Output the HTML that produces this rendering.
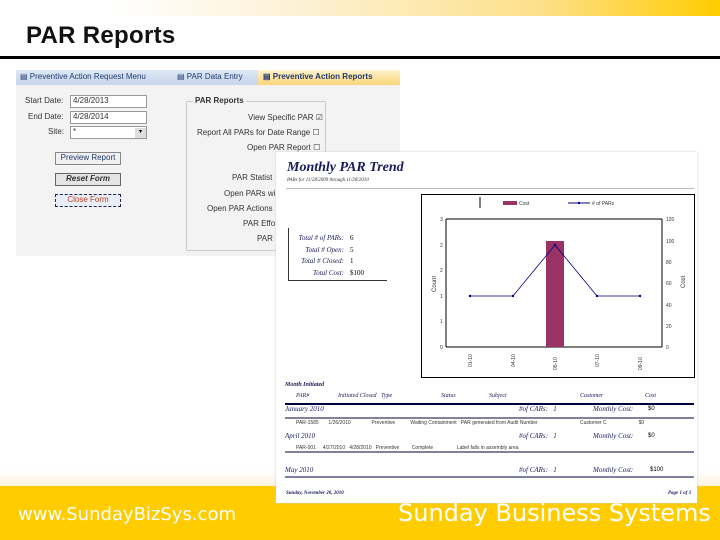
<!DOCTYPE html>
<html><head><meta charset="utf-8"><style>
*{margin:0;padding:0;box-sizing:border-box}
body{width:720px;height:540px;position:relative;overflow:hidden;background:#fff;font-family:"Liberation Sans",sans-serif}
.a{position:absolute;white-space:nowrap}
.s{font-family:"Liberation Serif",serif;font-style:italic;color:#1a1a5a}
.f{font-size:8px;color:#333}
.r{font-size:5px;color:#333}
</style></head><body>
<div class="a" style="left:0;top:0;width:720px;height:16px;background:linear-gradient(90deg,#fff 0%,#fff 15%,#fdf2d8 40%,#fde08a 75%,#ffcc00 100%)"></div>
<div class="a" style="left:26px;top:22px;font-size:24px;font-weight:bold;color:#111;letter-spacing:0.3px">PAR Reports</div>
<div class="a" style="left:0;top:56px;width:720px;height:3px;background:#000"></div>

<div class="a" style="left:16px;top:85px;width:384px;height:171px;background:#f3f3f3"></div>
<div class="a" style="left:16px;top:70px;width:384px;height:15px;background:linear-gradient(#dfe8f5,#c5d5ea)"></div>
<div class="a" style="left:258px;top:70px;width:142px;height:15px;background:linear-gradient(#fff2cc,#fcd47a)"></div>
<div class="a f" style="left:20px;top:72px;color:#203a70">▤ Preventive Action Request Menu</div>
<div class="a f" style="left:177px;top:72px;color:#203a70">▤ PAR Data Entry</div>
<div class="a f" style="left:263px;top:72px;color:#203a70;font-weight:bold">▤ Preventive Action Reports</div>
<div class="a f" style="left:25px;top:96px">Start Date:</div>
<div class="a f" style="left:28px;top:112px">End Date:</div>
<div class="a f" style="left:48px;top:127px">Site:</div>
<div class="a" style="left:70px;top:95px;width:77px;height:13px;background:#fff;border:1px solid #999"></div>
<div class="a f" style="left:73px;top:96px">4/28/2013</div>
<div class="a" style="left:70px;top:111px;width:77px;height:13px;background:#fff;border:1px solid #999"></div>
<div class="a f" style="left:73px;top:112px">4/28/2014</div>
<div class="a" style="left:70px;top:126px;width:77px;height:13px;background:#fff;border:1px solid #999"></div>
<div class="a f" style="left:73px;top:127px">*</div>
<div class="a" style="left:135px;top:128px;width:11px;height:10px;background:#ddd;font-size:6px;text-align:center">▾</div>
<div class="a f" style="left:55px;top:152px;width:66px;height:13px;border:1px solid #888;background:#f0f0f0;text-align:center;color:#203a70">Preview Report</div>
<div class="a f" style="left:55px;top:173px;width:66px;height:13px;border:1px solid #666;background:#e4e4e4;text-align:center;font-weight:bold;font-style:italic">Reset Form</div>
<div class="a f" style="left:55px;top:194px;width:66px;height:13px;border:1px dashed #225;background:#e8eef8;text-align:center;color:#c04020">Close Form</div>
<div class="a" style="left:186px;top:101px;width:140px;height:150px;border:1px solid #ccc"></div>
<div class="a f" style="left:193px;top:96px;font-weight:bold;background:#f3f3f3;padding:0 2px">PAR Reports</div>
<div class="a f" style="left:248px;top:113px">View Specific PAR ☑</div>
<div class="a f" style="left:197px;top:128px">Report All PARs for Date Range ☐</div>
<div class="a f" style="left:247px;top:143px">Open PAR Report ☐</div>
<div class="a f" style="left:232px;top:173px">PAR Statist</div>
<div class="a f" style="left:224px;top:189px">Open PARs wi</div>
<div class="a f" style="left:207px;top:204px">Open PAR Actions</div>
<div class="a f" style="left:243px;top:219px">PAR Effo</div>
<div class="a f" style="left:257px;top:234px">PAR</div>

<div class="a" style="left:0;top:470px;width:720px;height:16px;background:linear-gradient(#fff,#fdf3dc)"></div>
<div class="a" style="left:0;top:486px;width:720px;height:54px;background:#ffcc00"></div>
<div class="a" style="left:18px;top:504px;font-size:18px;color:#fff;font-family:'DejaVu Sans',sans-serif">www.SundayBizSys.com</div>

<div class="a" style="left:276px;top:152px;width:421px;height:351px;background:#fff;box-shadow:0 0 2px #ccc"></div>
<div class="a s" style="left:287px;top:160px;font-size:14px;font-weight:bold">Monthly PAR Trend</div>
<div class="a s r" style="left:287px;top:178px">PARs for 11/28/2009 through 11/28/2010</div>
<div class="a" style="left:286px;top:188px;width:408px;height:1px;background:#bbb"></div>
<div class="a" style="left:288px;top:228px;width:99px;height:53px;border-left:1px solid #333;border-bottom:1px solid #333"></div>
<div class="a s" style="left:290px;top:233px;font-size:7px;line-height:11.5px;text-align:right;width:54px">Total # of PARs:<br>Total # Open:<br>Total # Closed:<br>Total Cost:</div>
<div class="a" style="left:350px;top:233px;font-size:7px;line-height:11.5px;font-family:'Liberation Serif',serif">6<br>5<br>1<br>$100</div>

<svg class="a" style="left:0;top:0" width="720" height="540">
<rect x="421.5" y="194.5" width="273" height="183" fill="#fff" stroke="#000"/>
<line x1="480" y1="197" x2="480" y2="208" stroke="#000"/>
<rect x="503" y="201" width="14" height="4" fill="#993366"/>
<text x="519" y="205" font-size="5" fill="#333">Cost</text>
<line x1="568" y1="203" x2="590" y2="203" stroke="#000080"/><circle cx="579" cy="203" r="1.2" fill="#000080"/>
<text x="592" y="205" font-size="5" fill="#333"># of PARs</text>
<line x1="446" y1="219" x2="446" y2="347" stroke="#000"/>
<line x1="662" y1="219" x2="662" y2="347" stroke="#000"/>
<line x1="446" y1="347" x2="662" y2="347" stroke="#000"/>
<line x1="446" y1="219" x2="662" y2="219" stroke="#000"/>
<rect x="546" y="241" width="18" height="106" fill="#993366"/>
<polyline points="470,296 513,296 555,245 597,296 640,296" fill="none" stroke="#000080" stroke-width="0.8"/>
<g fill="#000080"><circle cx="470" cy="296" r="1.2"/><circle cx="513" cy="296" r="1.2"/><circle cx="555" cy="245" r="1.2"/><circle cx="597" cy="296" r="1.2"/><circle cx="640" cy="296" r="1.2"/></g>
<g font-size="5" fill="#333" font-family="Liberation Sans">
<text x="440" y="221">3</text><text x="440" y="247">2</text><text x="440" y="272">2</text><text x="440" y="298">1</text><text x="440" y="323">1</text><text x="440" y="349">0</text>
<text x="666" y="221">120</text><text x="666" y="243">100</text><text x="666" y="264">80</text><text x="666" y="285">60</text><text x="666" y="307">40</text><text x="666" y="328">20</text><text x="666" y="349">0</text>
<text x="0" y="0" transform="translate(436,292) rotate(-90)" font-size="6">Count</text>
<text x="0" y="0" transform="translate(685,288) rotate(-90)" font-size="6">Cost</text>
<text transform="translate(472,367) rotate(-90)">01-10</text><text transform="translate(515,367) rotate(-90)">04-10</text><text transform="translate(557,370) rotate(-90)">05-10</text><text transform="translate(599,367) rotate(-90)">07-10</text><text transform="translate(642,370) rotate(-90)">09-10</text>
</g>
<line x1="285" y1="404" x2="694" y2="404" stroke="#000040" stroke-width="2"/>
<line x1="285" y1="418" x2="694" y2="418" stroke="#000040"/>
<line x1="285" y1="452" x2="694" y2="452" stroke="#000040"/>
<line x1="285" y1="477" x2="694" y2="477" stroke="#000040"/>
</svg>
<div class="a s" style="left:285px;top:382px;font-size:6px;font-weight:bold">Month Initiated</div>
<div class="a s" style="left:296px;top:393px;font-size:6px">PAR#</div>
<div class="a s" style="left:338px;top:393px;font-size:6px">Initiated Closed &nbsp; Type</div>
<div class="a s" style="left:441px;top:393px;font-size:6px">Status</div>
<div class="a s" style="left:489px;top:393px;font-size:6px">Subject</div>
<div class="a s" style="left:580px;top:393px;font-size:6px">Customer</div>
<div class="a s" style="left:645px;top:393px;font-size:6px">Cost</div>
<div class="a s" style="left:285px;top:405px;font-size:7px">January 2010</div>
<div class="a s" style="left:519px;top:405px;font-size:7px">#of CARs: &nbsp; 1</div>
<div class="a s" style="left:593px;top:405px;font-size:7px">Monthly Cost:</div>
<div class="a" style="left:648px;top:406px;font-size:6px">$0</div>
<div class="a r" style="left:296px;top:420px">PAR-1585 &nbsp; &nbsp; &nbsp; 1/26/2010 &nbsp; &nbsp; &nbsp; &nbsp; &nbsp; &nbsp; &nbsp; Preventive &nbsp; &nbsp; &nbsp; &nbsp; &nbsp; Waiting Containment &nbsp; PAR generated from Audit Number</div>
<div class="a r" style="left:580px;top:420px">Customer C &nbsp; &nbsp; &nbsp; &nbsp; &nbsp; &nbsp; &nbsp; &nbsp; &nbsp; &nbsp; &nbsp; $0</div>
<div class="a s" style="left:285px;top:432px;font-size:7px">April 2010</div>
<div class="a s" style="left:519px;top:432px;font-size:7px">#of CARs: &nbsp; 1</div>
<div class="a s" style="left:593px;top:432px;font-size:7px">Monthly Cost:</div>
<div class="a" style="left:648px;top:433px;font-size:6px">$0</div>
<div class="a r" style="left:296px;top:445px">PAR-001 &nbsp; &nbsp; 4/27/2010 &nbsp; 4/28/2010 &nbsp; Preventive &nbsp; &nbsp; &nbsp; &nbsp; Complete &nbsp; &nbsp; &nbsp; &nbsp; &nbsp; &nbsp; &nbsp; &nbsp; Label falls in assembly area</div>
<div class="a s" style="left:285px;top:466px;font-size:7px">May 2010</div>
<div class="a s" style="left:519px;top:466px;font-size:7px">#of CARs: &nbsp; 1</div>
<div class="a s" style="left:593px;top:466px;font-size:7px">Monthly Cost:</div>
<div class="a" style="left:650px;top:467px;font-size:6px">$100</div>
<div class="a s" style="left:286px;top:491px;font-size:5px;font-weight:bold">Sunday, November 28, 2010</div>
<div class="a s" style="left:668px;top:491px;font-size:5px;font-weight:bold">Page 1 of 1</div>

<div class="a" style="left:398px;top:499px;font-size:24px;color:#fff;font-family:'DejaVu Sans',sans-serif">Sunday Business Systems</div>
</body></html>
